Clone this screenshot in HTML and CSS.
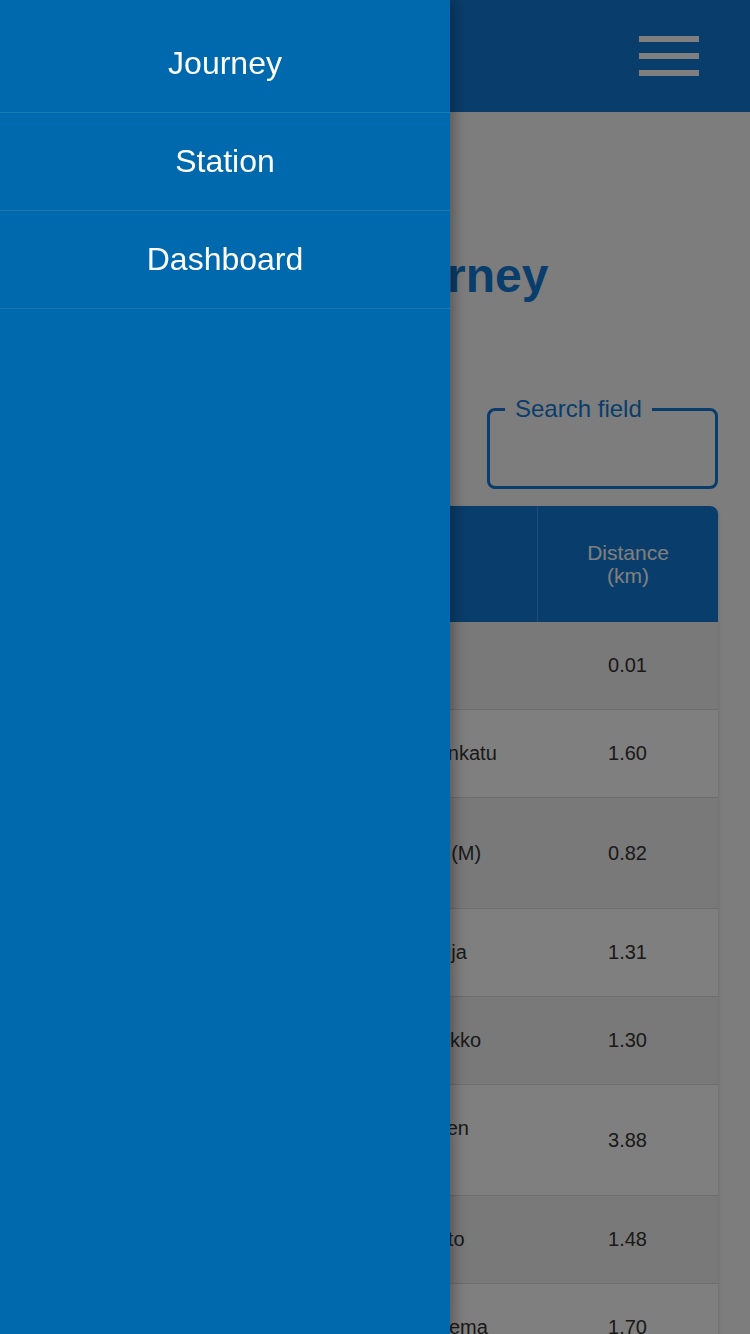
FILE: index.html
```html
<!DOCTYPE html>
<html lang="en">
<head>
<meta charset="utf-8">
<title>Journey</title>
<link rel="stylesheet" href="styles.css">
</head>
<body>
<header class="topbar">
  <button class="menu-btn" aria-label="Menu">
    <span class="bar"></span>
    <span class="bar"></span>
    <span class="bar"></span>
  </button>
</header>

<main class="content">
  <h1 class="page-title">Journey</h1>

  <div class="search-row">
    <fieldset class="search-field">
      <legend class="search-label">Search field</legend>
      <input class="search-input" type="text" aria-label="Search field">
    </fieldset>
  </div>

  <table class="journey-table">
    <colgroup>
      <col class="col-dep">
      <col class="col-ret">
      <col class="col-dist">
    </colgroup>
    <thead>
      <tr>
        <th class="th-text">Departure</th>
        <th class="th-text">Return</th>
        <th>Distance (km)</th>
      </tr>
    </thead>
    <tbody>
      <tr><td>Töölöntori</td><td>Töölöntori</td><td class="num">0.01</td></tr>
      <tr><td>Hietalahdentori</td><td>Ruoholahdenkatu</td><td class="num">1.60</td></tr>
      <tr><td>Kansallismuseo / Pohjoinen Hesperiankatu</td><td>Kalasatama (M)</td><td class="num">0.82</td></tr>
      <tr><td>Kaisaniemenpuisto</td><td>Kapteeninkuja</td><td class="num">1.31</td></tr>
      <tr><td>Arabiankatu</td><td>Kalevan varikko</td><td class="num">1.30</td></tr>
      <tr><td>Laajalahden aukio</td><td>Munkkiniemen ostoskeskus</td><td class="num">3.88</td></tr>
      <tr><td>Keilaniemi (M)</td><td>Aalto-yliopisto</td><td class="num">1.48</td></tr>
      <tr><td>Kumpulan kampus</td><td>Puistolan asema</td><td class="num">1.70</td></tr>
      <tr><td>Sörnäinen (M)</td><td>Hakaniemi (M)</td><td class="num">1.12</td></tr>
    </tbody>
  </table>
</main>

<div class="overlay"></div>

<nav class="drawer">
  <a class="drawer-item" href="#">Journey</a>
  <a class="drawer-item" href="#">Station</a>
  <a class="drawer-item" href="#">Dashboard</a>
</nav>
</body>
</html>
```

FILE: styles.css
```css
* {
  box-sizing: border-box;
}

html, body {
  margin: 0;
  padding: 0;
  height: 1334px;
  overflow: hidden;
}

body {
  font-family: "Liberation Sans", Arial, sans-serif;
  background: #fbfbfb;
  color: #333;
}

.topbar {
  height: 112px;
  background: #137bd6;
  display: flex;
  align-items: center;
  justify-content: flex-end;
  padding-right: 51px;
}

.menu-btn {
  background: none;
  border: 0;
  padding: 0;
  display: flex;
  flex-direction: column;
  gap: 11px;
  cursor: pointer;
}

.bar {
  display: block;
  width: 60px;
  height: 6px;
  background: #ffffff;
}

.content {
  padding: 0 32px;
}

.page-title {
  margin: 136px 0 0;
  padding-left: 160px;
  text-align: center;
  font-size: 48px;
  line-height: 56px;
  font-weight: 700;
  color: #137bd6;
}

.search-row {
  margin-top: 91px;
  display: flex;
  justify-content: flex-end;
}

.search-field {
  width: 231px;
  margin: 0;
  padding: 0 15px 10px;
  border: 3px solid #137bd6;
  border-radius: 8px;
  min-width: 0;
}

.search-label {
  padding: 0 10px;
  font-size: 24px;
  line-height: 28px;
  color: #137bd6;
}

.search-input {
  display: block;
  width: 100%;
  height: 53px;
  border: 0;
  background: transparent;
  outline: none;
  font: inherit;
  font-size: 20px;
}

.journey-table {
  margin-top: 17px;
  width: 100%;
  table-layout: fixed;
  border-collapse: separate;
  border-spacing: 0;
  background: #ffffff;
  border-radius: 8px 8px 0 0;
  box-shadow: 0 2px 4px rgba(0, 0, 0, 0.18);
}

.col-dep { width: 292px; }
.col-ret { width: 213px; }
.col-dist { width: 181px; }

.journey-table th {
  background: #137bd6;
  color: #ffffff;
  font-weight: 400;
  font-size: 21px;
  line-height: 23px;
  padding: 35px 28px;
  text-align: center;
}

.journey-table th.th-text {
  text-align: left;
  padding-left: 16px;
  padding-right: 16px;
}

.journey-table th + th {
  border-left: 1px solid rgba(255, 255, 255, 0.22);
}

.journey-table th:first-child {
  border-top-left-radius: 8px;
}

.journey-table th:last-child {
  border-top-right-radius: 8px;
}

.journey-table td {
  font-size: 20px;
  line-height: 23px;
  padding: 32px 16px;
  border-bottom: 1px solid #dcdcdc;
  color: #333;
  vertical-align: middle;
}

.journey-table tbody tr:nth-child(odd) td {
  background: #f3f3f3;
}

.journey-table td.num {
  text-align: center;
}

.overlay {
  position: fixed;
  inset: 0;
  background: rgba(0, 0, 0, 0.5);
}

.drawer {
  position: fixed;
  top: 0;
  left: 0;
  bottom: 0;
  width: 450px;
  background: #0069ad;
  padding-top: 15px;
  display: flex;
  flex-direction: column;
  box-shadow: 3px 0 14px rgba(0, 0, 0, 0.35);
}

.drawer-item {
  display: block;
  height: 98px;
  line-height: 97px;
  text-align: center;
  font-size: 32px;
  color: #ffffff;
  text-decoration: none;
  border-bottom: 1px solid rgba(255, 255, 255, 0.1);
}
```
